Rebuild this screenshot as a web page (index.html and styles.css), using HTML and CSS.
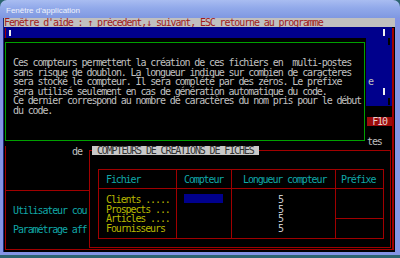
FILE: index.html
```html
<!DOCTYPE html>
<html lang="fr">
<head>
<meta charset="utf-8">
<title>Fenêtre d'application</title>
<link rel="stylesheet" href="styles.css">
</head>
<body>
<div class="window">
  <div class="titlebar"><span class="title">Fenêtre d'application</span></div>
  <div class="client">
    <div class="console">
      <div class="helpbar">Fenêtre d'aide : ↑ précedent,↓ suivant, ESC retourne au programme</div>
      <div class="screen">
        <div class="bluepanel">
          <span class="mark cursor-left"></span>
          <span class="mark cursor-right"></span>
          <span class="mark dark-top"></span>
          <span class="e-char">e</span>
          <span class="mark cursor-mid"></span>
          <span class="mark dark-bottom"></span>
        </div>
        <div class="frame"></div>
        <div class="divider"></div>
        <div class="f10">F10</div>
        <div class="txt tes">tes</div>
        <div class="txt de">de</div>
        <pre class="txt userbox">Utilisateur cou

Paramétrage aff</pre>

        <div class="helpbox">
          <div class="helpframe">
<pre class="helptext">Ces compteurs permettent la création de ces fichiers en  multi-postes
sans risque de doublon. La longueur indique sur combien de caractères
sera stocké le compteur. Il sera complété par des zéros. Le préfixe
sera utilisé seulement en cas de génération automatique du code.
Ce dernier correspond au nombre de caractères du nom pris pour le début
du code.</pre>
          </div>
        </div>

        <div class="cwin">
          <div class="cwin-title"> COMPTEURS DE CREATIONS DE FICHES </div>
          <div class="ctable">
            <div class="cell head c-fichier">Fichier</div>
            <div class="cell head c-compteur">Compteur</div>
            <div class="cell head c-longueur">Longueur compteur</div>
            <div class="cell head c-prefixe">Préfixe</div>
            <pre class="cell body b-fichier">Clients .....
Prospects ...
Articles ....
Fournisseurs</pre>
            <div class="cell body b-compteur"><span class="selbar"></span></div>
            <pre class="cell body b-longueur">5
5
5
5</pre>
            <div class="cell b-prefixe1"></div>
            <div class="cell b-prefixe2"></div>
          </div>
        </div>
      </div>
    </div>
  </div>
  <div class="bottom"></div>
</div>
</body>
</html>
```

FILE: styles.css
```css
* { box-sizing: border-box; margin: 0; padding: 0; }

html, body {
  width: 400px;
  height: 258px;
  overflow: hidden;
  background: #2c6470;
}

.window {
  width: 400px;
  height: 258px;
  display: flex;
  flex-direction: column;
}

.titlebar {
  height: 18px;
  padding: 6px 0 0 6px;
  background: linear-gradient(#a9bdf1, #91a9ea 45%, #7f98e1);
  border-radius: 7px 7px 0 0;
}

.title {
  display: block;
  font: 8px/10px "Liberation Sans", Arial, sans-serif;
  color: #eef2fc;
}

.client {
  display: flex;
  height: 234px;
  background: #8394e4;
  padding: 0 5px 0 3px;
}

.console {
  width: 392px;
  border-left: 1px solid #1a2a7a;
  background: #000;
  display: flex;
  flex-direction: column;
  font: 10px/9.6px "DejaVu Sans Mono", monospace;
  letter-spacing: -1.12px;
  color: #c0c0c0;
}

.helpbar {
  height: 9px;
  background: #c0c0c0;
  color: #a01c1c;
  line-height: 9.6px;
  white-space: pre;
  overflow: hidden;
}

.screen {
  position: relative;
  flex: 1;
  background: #000;
}

.bottom {
  height: 6px;
  background: linear-gradient(#8394e4 0 3px, #2c6470 3px);
}

/* underlying screen */
.bluepanel {
  position: absolute;
  left: 0;
  top: 0;
  width: 388px;
  height: 79px;
  background: #00008c;
}

.mark { position: absolute; display: block; }
.cursor-left  { left: 5px;   top: 3px;  width: 2px; height: 6px; background: #f0f0f0; }
.cursor-right { left: 379px; top: 2px;  width: 2px; height: 7px; background: #f0f0f0; }
.dark-top     { left: 384px; top: 11px; width: 2px; height: 7px; background: #000; }
.cursor-mid   { left: 379px; top: 61px; width: 2px; height: 7px; background: #f0f0f0; }
.dark-bottom  { left: 384px; top: 71px; width: 2px; height: 7px; background: #000; }
.e-char { position: absolute; left: 364px; top: 50px; color: #c0c0c0; }

.frame {
  position: absolute;
  left: 1px;
  top: 1px;
  width: 389px;
  height: 222px;
  border-left: 1px solid #a00000;
  border-right: 2px solid #a00000;
  border-bottom: 1px solid #a00000;
}

.divider {
  position: absolute;
  left: 1px;
  top: 163px;
  width: 85px;
  border-top: 1px solid #a00000;
}

.txt { position: absolute; white-space: pre; font: inherit; color: #c0c0c0; }
.tes { left: 363px; top: 110px; }
.de  { left: 68px;  top: 120px; }
.userbox { left: 9px; top: 179px; color: #10a8a8; }

.f10 {
  position: absolute;
  left: 363px;
  top: 90px;
  width: 25px;
  height: 9px;
  background: #9c0c0c;
  color: #e8d0d0;
  text-align: center;
  line-height: 9px;
}

/* help popup */
.helpbox {
  position: absolute;
  left: 0;
  top: 11px;
  width: 362px;
  height: 108px;
  background: #000;
  padding: 4px 1px 5px 1px;
}

.helpframe {
  height: 100%;
  border: 1px solid #00a000;
  padding: 15px 0 0 7px;
}

.helptext {
  font: inherit;
  color: #c0c0c0;
  white-space: pre;
}

/* compteurs window */
.cwin {
  position: absolute;
  left: 85px;
  top: 123px;
  width: 302px;
  height: 98px;
  border: 1px solid #a00000;
  background: #000;
  padding: 18px 0 0 8px;
}

.cwin-title {
  position: absolute;
  left: 2px;
  top: -5px;
  width: 167px;
  height: 9px;
  background: #c8c8c8;
  color: #303030;
  white-space: pre;
  line-height: 9.6px;
}

.ctable {
  display: grid;
  grid-template-columns: 77px 54px 103px 47px;
  grid-template-rows: 18px 29px 19px;
  gap: 1px;
  width: 286px;
  background: #a00000;
  border: 1px solid #a00000;
}

.cell {
  background: #000;
  font: inherit;
  white-space: pre;
}

.head { color: #10a8a8; padding-top: 5px; }
.c-fichier  { padding-left: 7px; }
.c-compteur { padding-left: 7px; }
.c-longueur { padding-left: 11px; }
.c-prefixe  { padding-left: 5px; }

.body { grid-row: 2 / 4; padding-top: 6px; }
.b-fichier  { grid-column: 1; color: #b8b800; padding-left: 7px; }
.b-compteur { grid-column: 2; position: relative; }
.b-longueur { grid-column: 3; color: #c8c8c8; padding-left: 46px; }
.b-prefixe1 { grid-column: 4; grid-row: 2; }
.b-prefixe2 { grid-column: 4; grid-row: 3; }

.selbar {
  position: absolute;
  left: 7px;
  top: 5px;
  width: 39px;
  height: 9px;
  background: #00008c;
}
```
